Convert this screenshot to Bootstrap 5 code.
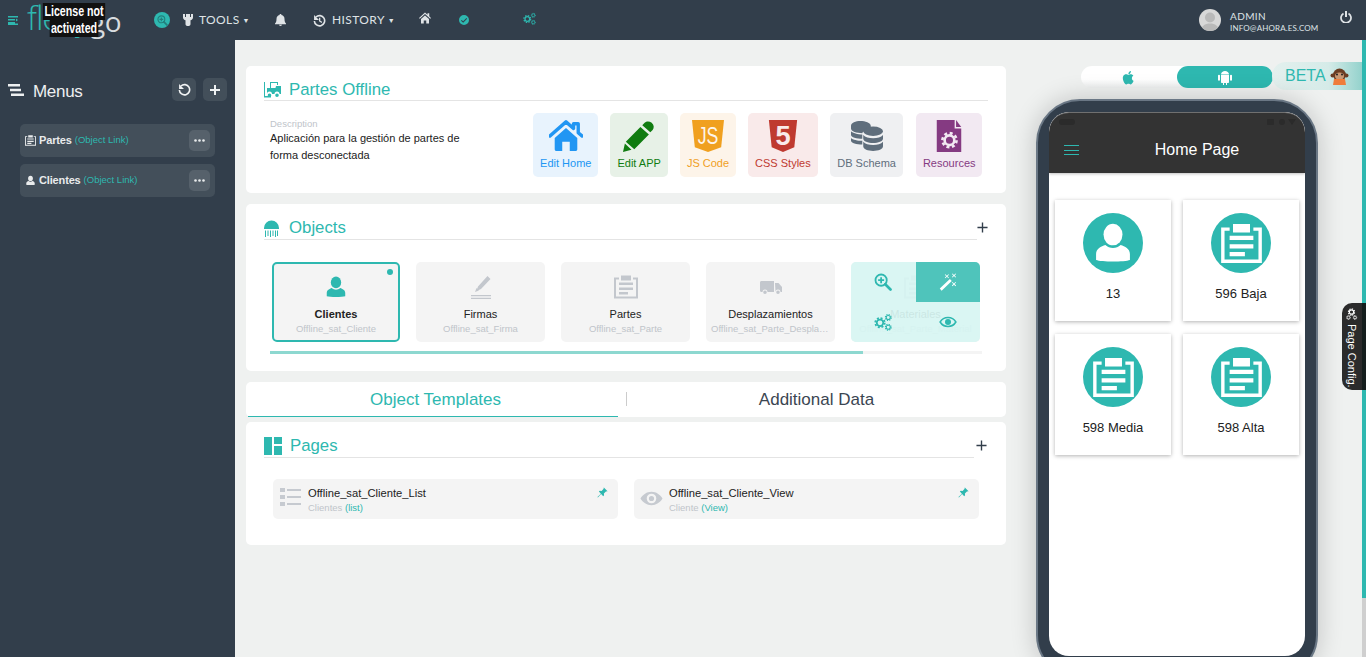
<!DOCTYPE html>
<html lang="en">
<head>
  <meta charset="UTF-8" />
  <meta name="viewport" content="width=device-width, initial-scale=1.0"/>
  <title>flexygo</title>
  <link href="https://cdn.jsdelivr.net/npm/bootstrap@5.3.0/dist/css/bootstrap.min.css" rel="stylesheet"/>
  <style>
    html, body { height: 657px; overflow: hidden; }
    body { font-family: "Liberation Sans", Arial, sans-serif; background: #eff1f0; color: #222; position: relative; }
    svg { display: block; fill: currentColor; flex: none; }
    .topbar { height: 40px; background: #323e4b; color: #dfe3e6; position: relative; font-family: Lato, sans-serif; }
    .top-item { position: absolute; top: 0; height: 40px; display: flex; align-items: center; font-size: 12px; letter-spacing: .4px; }
    .top-caret { font-size: 7px; margin-left: 3px; }
    .logo-fl { position: absolute; left: 27px; top: -2px; font: 300 33px/40px "Open Sans", sans-serif; color: #2eb8b0; letter-spacing: -1px; }
    .logo-go { position: absolute; left: 90px; top: 1px; font: 400 28px/40px "Open Sans", sans-serif; color: #d8dcdf; letter-spacing: -.5px; }
    .lic-box { position: absolute; left: 41px; top: 3px; width: 66px; text-align: center; font: 700 14px/17px "Liberation Sans", sans-serif; color: #fff; white-space: nowrap; }
    .lic-box span { display: block; width: fit-content; margin: 0 auto; background: #111; padding: 0 2px; }
    .lic-squeeze { transform: scaleX(.76); transform-origin: center; width: 88px; margin-left: -11px; }
    .who { left: 1230px; display: block; padding-top: 10px; font-size: 10px; line-height: 12px; }
    .who small { display: block; font-size: 8px; letter-spacing: .15px; }
    .avatar { width: 22px; height: 22px; border-radius: 50%; background: #d8d8d8; overflow: hidden; }
    .page-body { height: 617px; }
    .side-menu { width: 235px; background: #323e4b; color: #eef0f1; padding: 38px 8px 0 20px; flex: none; }
    .menu-head { height: 23px; margin-left: -12px; margin-bottom: 23px; }
    .menu-title { font-size: 17px; letter-spacing: -.3px; margin: 5px 0 0 9px; }
    .menu-btn { width: 24px; height: 23px; background: #434f5a; border-radius: 5px; color: #f0f2f3; }
    .menu-row { width: 195px; height: 33px; background: #434f5a; border-radius: 5px; margin-bottom: 7px; padding: 0 5px; font-size: 11px; font-weight: 700; letter-spacing: -.15px; color: #e9ebec; }
    .menu-row > svg:first-child { margin-right: 3px; }
    .menu-row em { font-style: normal; font-weight: 400; font-size: 9.5px; letter-spacing: 0; color: #2eb8b0; margin-left: 3px; }
    .dots-btn { width: 21px; height: 21px; background: #56616b; border-radius: 5px; margin-left: auto; }
    .mid-col { width: 771px; padding: 26px 0 0 11px; flex: none; }
    .panel { background: #fff; border-radius: 5px; width: 760px; padding: 0 18px; }
    .sec-head { height: 35px; border-bottom: 1px solid #e4e4e4; color: #2eb8b0; font-size: 16.8px; line-height: 22px; }
    .sec-head svg { margin-bottom: 2px; }
    .sec-tall { height: 36px; }
    .sec-low { line-height: 20px; }
    .sec-head span { margin-left: 7px; }
    .add-mark { position: absolute; color: #323e4b; }
    .app-desc { width: 205px; margin: 17px 0 0 6px; font-size: 11px; line-height: 16.5px; }
    .app-desc small { display: block; font-size: 9.5px; line-height: 12px; color: #c0c4ca; }
    .tool-tile { height: 64px; padding: 0 7px; border-radius: 5px; font-size: 11px; text-align: center; }
    .tool-tile svg { height: 32px; width: 34px; margin: 7px auto 3px; }
    .tool-row { margin: 12px 6px 0 auto; column-gap: 12px; }
    .t-blue { background: #e8f3fd; color: #2196f3; }
    .t-green { background: #e7f1e7; color: #107c10; }
    .t-orange { background: #fdf4e9; color: #f0a01f; }
    .t-red { background: #f9eaea; color: #bf3a30; }
    .t-gray { background: #eff0f2; color: #5f6e7c; padding: 0 7.5px; }
    .t-purple { background: #f2e9f2; color: #853a82; padding: 0 6.5px; margin-left: 1px; }
    .obj-tile { width: 129px; height: 80px; background: #f4f4f4; border-radius: 5px; text-align: center; font-size: 11px; position: relative; padding-top: 13px; color: #222; }
    .obj-tile svg { width: 24px; height: 24px; margin: 0 auto 7px; color: #c3c7cd; }
    .obj-tile small { display: block; font-size: 9.5px; color: #c0c4ca; white-space: nowrap; overflow: hidden; text-overflow: ellipsis; padding: 0 5px; line-height: 12px; }
    .obj-active { width: 128px; border: 2px solid #2eb8b0; padding-top: 11px; font-weight: 700; }
    .obj-active small { font-weight: 400; }
    .obj-active svg { color: #2eb8b0; }
    .dot-on { position: absolute; top: 5px; right: 5px; width: 6px; height: 6px; border-radius: 50%; background: #2eb8b0; }
    .hover-mask { position: absolute; inset: 0; display: grid; grid-template-columns: 1fr 1fr; grid-template-rows: 40px 40px; background: rgba(215,245,242,.93); border-radius: 5px; overflow: hidden; color: #2eb8b0; }
    .hover-mask div { display: flex; align-items: center; justify-content: center; }
    .hover-mask svg { width: 18px; height: 18px; margin: 0; color: #2eb8b0; }
    .hover-mask .on { background: #4fc4bb; }
    .hover-mask .on svg { color: #fff; }
    .track { height: 3px; background: #f4f4f4; margin: 9px 6px 0 6px; }
    .track div { height: 3px; background: #8dd8d0; }
    .tab-bar { height: 35px; width: 760px; background: #fff; border-radius: 5px; font-size: 17px; color: #3b4652; }
    .tab-on { width: 370px; margin-left: 2px; padding-left: 5px; height: 35px; color: #2eb8b0; border-bottom: 1px solid #2eb8b0; text-align: center; line-height: 36px; }
    .tab-off { flex: 1; text-align: center; line-height: 36px; padding-right: 8px; }
    .tab-sep { width: 1px; height: 14px; background: #ccc; margin: 10px 8px 0; }
    .page-item { width: 345px; height: 40px; background: #f4f4f4; border-radius: 5px; position: relative; padding: 8px 0 0 7px; font-size: 11.2px; line-height: 13px; }
    .page-item small { display: block; font-size: 9.5px; color: #c0c4ca; margin-top: 1px; }
    .page-item small b { font-weight: 400; color: #2eb8b0; }
    .pin-mark { position: absolute; top: 8px; right: 10px; color: #2eb8b0; }
    .os-switch { position: absolute; left: 1081px; top: 66px; width: 192px; height: 22px; background: linear-gradient(#fff 60%, #eceeee); border-radius: 11px; color: #2eb8b0; }
    .os-on { background: #2eb8b0; color: #fff; border-radius: 11px; }
    .beta-tag { position: absolute; left: 1272px; top: 62px; width: 94px; height: 28px; border-radius: 14px 0 0 14px; background: linear-gradient(90deg, #e3f0ee, #d5ebe8 60%, #8ccfc9); color: #2eb8b0; font-size: 16px; padding-left: 13px; }
    .phone { position: absolute; left: 1036px; top: 99px; width: 282px; height: 580px; background: #323e4b; border: 2px solid #6a7785; border-radius: 44px; box-shadow: 0 0 26px rgba(0,0,0,.2); padding: 11px; }
    .screen { width: 256px; height: 544px; background: #fff; border-radius: 20px; overflow: hidden; }
    .screen-head { height: 61px; background: #333; color: #fff; font-size: 16px; position: relative; border-radius: 20px 20px 0 0; box-shadow: inset 0 1px 0 rgba(255,255,255,.3), 0 1px 3px rgba(0,0,0,.25); }
    .screen-head .title-txt { position: absolute; left: 40px; right: 0; top: 28px; text-align: center; line-height: 20px; }
    .burger { position: absolute; left: 15px; top: 33px; width: 15px; height: 10px; border-top: 1px solid #2eb8b0; border-bottom: 1px solid #2eb8b0; }
    .burger::after { content: ""; display: block; height: 1px; background: #2eb8b0; margin-top: 3.5px; }
    .cam-dots { position: absolute; top: 6px; right: 9px; color: #2b2b2b; }
    .speaker { position: absolute; left: 10px; top: 7px; width: 16px; height: 6px; border-radius: 3px; background: #2b2b2b; }
    .home-grid { display: grid; grid-template-columns: 116px 116px; gap: 13px 12px; padding: 27px 0 0 6px; }
    .home-tile { height: 121px; background: #fff; box-shadow: 0 1px 4px rgba(0,0,0,.3); text-align: center; font-size: 13px; padding-top: 13px; color: #222; }
    .home-round { width: 60px; height: 60px; border-radius: 50%; background: #2eb8b0; color: #fff; margin: 0 auto 11px; }
    .page-cfg { position: absolute; left: 1342px; top: 303px; width: 24px; height: 87px; background: #2b2b2b; border-right: 4px solid #141e1d; border-radius: 10px 0 0 10px; color: #fff; font-size: 11px; writing-mode: vertical-rl; white-space: nowrap; padding-top: 5px; line-height: 20px; }
    .scroll-rail { position: absolute; left: 1362px; top: 40px; width: 4px; height: 617px; background: #cfcfcf; }
    .scroll-rail div { height: 558px; background: #2eb8b0; }
  </style>
</head>
<body>
  <svg width="0" height="0" class="position-absolute">
    <symbol id="i-user" viewBox="-1 0 26 24"><ellipse cx="12" cy="7" rx="5.600" ry="6.400"/><path d="M2 22v-3.500c0-3 3-4.500 5.500-5.300 1.200 1.100 2.800 1.700 4.500 1.700s3.300-.6 4.500-1.700c2.500.8 5.500 2.300 5.500 5.300V22c-3 1.200-17 1.200-20 0z"/></symbol>
    <symbol id="i-clip" viewBox="0 0 24 23"><path d="M0 2h5v2H2v17h20V4h-3V2h5v21H0z"/><path d="M7 0h10v5H7zM5 7h14v2.500H5zM5 12h14v2.500H5zM5 16.500h9V19H5z"/></symbol>
    <symbol id="i-sign" viewBox="0 0 24 24"><path d="M2 20h20v1.200H2zM2 22.800h20V24H2zM18.500 1l3 3-9.500 10-4.500 2 1.500-4.500zM6 17l1.500-4 2.500 2.500z"/></symbol>
    <symbol id="i-van" viewBox="0 0 24 24"><path d="M1 7.500c0-.8.600-1.500 1.500-1.500H15v11H8.500a2.500 2.500 0 0 0-5 0H2.500C1.600 17 1 16.400 1 15.500zM16 8h3.500l3.500 4v5h-1.500a2.500 2.500 0 0 0-5 0zM6 15.500a1.800 1.800 0 1 1 0 3.600 1.800 1.800 0 0 1 0-3.600zM19 15.500a1.800 1.800 0 1 1 0 3.600 1.800 1.800 0 0 1 0-3.600z"/></symbol>
    <symbol id="i-zoom" viewBox="0 0 24 24"><g fill="none" stroke="currentColor" stroke-width="2.400"><circle cx="9.500" cy="9.500" r="7.500"/><path d="M5.500 9.500h8M9.500 5.500v8"/><path d="M15 15l7 7" stroke-width="3.600" stroke-linecap="round"/></g></symbol>
    <symbol id="i-wand" viewBox="0 0 24 24"><path d="M1 20.500L14.500 8l2.500 2.700L3.500 23.500zM8.500 1.500l2 2 2-2 .8.800-2 2 2 2-.8.800-2-2-2 2-.8-.800 2-2-2-2zM18 .5l2 2 2-2 .8.800-2 2 2 2-.8.800-2-2-2 2-.8-.800 2-2-2-2zM18 12l2 2 2-2 .8.800-2 2 2 2-.8.800-2-2-2 2-.8-.800 2-2-2-2z"/></symbol>
    <symbol id="i-gear" viewBox="0 0 24 24"><circle cx="12" cy="12" r="6.500" fill="none" stroke="currentColor" stroke-width="3.500"/><circle cx="12" cy="12" r="9.500" fill="none" stroke="currentColor" stroke-width="3.500" stroke-dasharray="4 3.460"/></symbol>
    <symbol id="i-gears" viewBox="0 0 24 24"><use href="#i-gear" x="0" y="5" width="16" height="16"/><use href="#i-gear" x="14" y="1" width="10" height="10"/><use href="#i-gear" x="14" y="14" width="10" height="10"/></symbol>
    <symbol id="i-eye" viewBox="0 0 24 24"><path fill-rule="evenodd" d="M12 5c5 0 9 3 11.500 7-2.500 4-6.500 7-11.500 7S3 16 .5 12C3 8 7 5 12 5zm0 2a5 5 0 1 0 0 10 5 5 0 0 0 0-10zm0 2.300a2.700 2.700 0 1 1 0 5.400 2.700 2.700 0 0 1 0-5.400z"/></symbol>
    <symbol id="i-eye-line" viewBox="0 0 24 24"><path d="M12 6c4.500 0 8.500 2.600 10.500 6-2 3.400-6 6-10.500 6S3.500 15.400 1.500 12C3.500 8.600 7.500 6 12 6z" fill="none" stroke="currentColor" stroke-width="2"/><circle cx="12" cy="12" r="4"/></symbol>
    <symbol id="i-pin" viewBox="0 0 24 24"><path d="M15 1l8 8-2 1-1-1-5 5 .5 4-2 2-4.500-4.500L2 23l-1-1 7.500-7.500L4 10l2-2 4 .5 5-5-1-1z"/></symbol>
    <symbol id="i-refresh" viewBox="0 0 24 24"><path d="M5.500 5.500A9.500 9.500 0 1 1 2.500 13" fill="none" stroke="currentColor" stroke-width="3"/><path d="M2 2v9h9z"/></symbol>
    <symbol id="i-plus" viewBox="0 0 24 24"><path d="M10 2h4v8h8v4h-8v8h-4v-8H2v-4h8z"/></symbol>
    <symbol id="i-plus-thin" viewBox="0 0 24 24"><path d="M10.500 1h3v9.500H23v3h-9.500V23h-3v-9.500H1v-3h9.500z"/></symbol>
  </svg>

  <header class="topbar">
    <div class="top-item" style="left:8px"><svg width="10" height="9" viewBox="0 0 10 9" style="color:#2eb8b0"><path d="M0 0h10v1.500H0zM0 3h7v1.500H0zM8 2.500l2 1.500-2 1.500zM0 6h7v1.500H0zM0 7.500h10V9H0z"/></svg></div>
    <div class="logo-fl">flexy</div>
    <div class="logo-go">go</div>
    <div class="lic-box"><div class="lic-squeeze"><span>License not</span><span>activated</span></div></div>
    <div class="top-item" style="left:154px"><span class="d-flex align-items-center justify-content-center rounded-circle" style="width:16px;height:16px;background:#2eb8b0;color:#237f7c"><svg width="11" height="11"><use href="#i-zoom"/></svg></span></div>
    <div class="top-item" style="left:183px"><svg width="10" height="12" viewBox="0 0 10 12"><path d="M0 0h2v3h1V0h4v3h1V0h2v3.500C10 5 8.800 6 7.500 6.300V10c0 1.400-1 2-2.500 2s-2.500-.6-2.500-2V6.300C1.200 6 0 5 0 3.500z"/></svg><span style="margin-left:6px">TOOLS</span><span class="top-caret">▼</span></div>
    <div class="top-item" style="left:275px"><svg width="11" height="12" viewBox="0 0 11 12"><path d="M5.500 0c.5 0 1 .4 1 1C8.500 1.500 9.500 3 9.500 5c0 2.500.5 3.500 1.500 4.500v.7H0v-.7C1 8.500 1.500 7.500 1.500 5c0-2 1-3.500 3-4 0-.6.500-1 1-1zM4 10.800h3c0 .7-.7 1.200-1.500 1.200S4 11.500 4 10.800z"/></svg></div>
    <div class="top-item" style="left:313px"><svg width="13" height="13" viewBox="0 0 24 24"><use href="#i-refresh"/><path d="M11 7h2.500v5.500l3.500 2-1.200 2-4.800-3z"/></svg><span style="margin-left:6px">HISTORY</span><span class="top-caret">▼</span></div>
    <div class="top-item" style="left:419px;top:-2px"><svg width="12" height="12" viewBox="0 0 24 24"><path d="M12 1l5 4.500V2.500h3.500v6L24 12l-1.500 1.500L12 4 1.500 13.500 0 12zM4 14l8-7 8 7v9h-5.500v-6h-5v6H4z"/></svg></div>
    <div class="top-item" style="left:459px"><svg width="10" height="10" viewBox="0 0 10 10" style="color:#2eb8b0"><path fill-rule="evenodd" d="M5 0a5 5 0 1 1 0 10A5 5 0 0 1 5 0zM2.500 5L2 5.700l2.200 2 3.900-4L7.400 3 4.200 6.300z"/></svg></div>
    <div class="top-item" style="left:523px;top:-2px;color:#2eb8b0"><svg width="13" height="13"><use href="#i-gears"/></svg></div>
    <div class="top-item" style="left:1199px"><div class="avatar"><svg width="22" height="22" viewBox="0 0 22 22" style="color:#b9b9b9"><circle cx="11" cy="8.500" r="5"/><path d="M2 22c0-5 4-7.500 9-7.500s9 2.500 9 7.500z"/></svg></div></div>
    <div class="top-item who">ADMIN<small>INFO@AHORA.ES.COM</small></div>
    <div class="top-item" style="left:1340px;top:-3px"><svg width="12" height="12" viewBox="0 0 24 24"><path d="M7 5a10 10 0 1 0 10 0" fill="none" stroke="currentColor" stroke-width="3.500"/><path d="M10 0h4v12h-4z"/></svg></div>
  </header>

  <div class="d-flex page-body">
    <aside class="side-menu">
      <div class="menu-head d-flex align-items-center">
        <svg width="16" height="12" viewBox="0 0 16 12"><path d="M0 0h12v2.500H0zM2 4.700h11v2.500H2zM3 9.500h13V12H3z"/></svg>
        <span class="menu-title">Menus</span>
        <span class="menu-btn d-flex align-items-center justify-content-center ms-auto"><svg width="13" height="13"><use href="#i-refresh"/></svg></span>
        <span class="menu-btn d-flex align-items-center justify-content-center" style="margin-left:7px"><svg width="12" height="12"><use href="#i-plus"/></svg></span>
      </div>
      <div class="menu-row d-flex align-items-center"><svg width="11" height="13"><use href="#i-clip"/></svg>Partes <em>(Object Link)</em><span class="dots-btn d-flex align-items-center justify-content-center"><svg width="11" height="3" viewBox="0 0 11 3"><circle cx="1.500" cy="1.500" r="1.300"/><circle cx="5.500" cy="1.500" r="1.300"/><circle cx="9.500" cy="1.500" r="1.300"/></svg></span></div>
      <div class="menu-row d-flex align-items-center"><svg width="11" height="13"><use href="#i-user"/></svg>Clientes <em>(Object Link)</em><span class="dots-btn d-flex align-items-center justify-content-center"><svg width="11" height="3" viewBox="0 0 11 3"><circle cx="1.500" cy="1.500" r="1.300"/><circle cx="5.500" cy="1.500" r="1.300"/><circle cx="9.500" cy="1.500" r="1.300"/></svg></span></div>
    </aside>

    <main class="mid-col">
      <section class="panel" style="height:127px">
        <div class="sec-head sec-low d-flex align-items-end">
          <svg width="18" height="18" viewBox="0 0 18 18"><path d="M0 2h1v14h6v1.500H0zM3 8h3V2h8v3h-1V3H7v5h4.500l.5-2h5v8h-1.500a2.500 2.500 0 0 0-5 0H8a2.500 2.500 0 0 0-5 0zM5.500 13.500a1.800 1.800 0 1 1 0 3.600 1.800 1.800 0 0 1 0-3.600zM13 13.500a1.800 1.800 0 1 1 0 3.600 1.800 1.800 0 0 1 0-3.600z"/></svg>
          <span>Partes Offline</span>
        </div>
        <div class="d-flex">
          <div class="app-desc"><small>Description</small>Aplicación para la gestión de partes de forma desconectada</div>
          <div class="d-flex tool-row">
            <div class="tool-tile t-blue"><svg viewBox="0 0 36 34"><path d="M1 17L18 2l8 7V4h5v9.500l4 3.500" fill="none" stroke="currentColor" stroke-width="3.600" stroke-linecap="round" stroke-linejoin="round"/><path d="M6 19L18 8.500 30 19v12c0 1-.8 2-2 2h-6V23h-8v10H8c-1.200 0-2-1-2-2z"/></svg>Edit Home</div>
            <div class="tool-tile t-green"><svg viewBox="0 0 36 34"><path d="M24 3c2-2 5-2 7.500 0s2.800 5.500 1 7.500l-2.500 2.500-8.500-7.500zM19.500 7.500l9 8L13 31l-9-8zM3 25l7 6.500-9 2.500z"/></svg>Edit APP</div>
            <div class="tool-tile t-orange"><svg viewBox="0 0 36 34"><path d="M1 0h34l-3 29-14 5-14-5z"/><text x="18" y="26" text-anchor="middle" font-family="Liberation Sans, sans-serif" font-size="25" textLength="22" lengthAdjust="spacingAndGlyphs" fill="#fdf4e9">JS</text></svg>JS Code</div>
            <div class="tool-tile t-red"><svg viewBox="0 0 36 34"><path d="M3 0h30l-3 29-12 5-12-5z"/><text x="18" y="27" text-anchor="middle" font-family="Liberation Sans, sans-serif" font-weight="700" font-size="29" fill="#f9eaea">5</text></svg>CSS Styles</div>
            <div class="tool-tile t-gray"><svg viewBox="0 0 36 34"><path d="M1 6c0-3 5-5 10-5s11 2 11 5v3c-4 0-8 2-9 5-6 0-12-2-12-5zM1 12c2 2 7 3.500 12 3.500v4.500c-6 0-12-1.500-12-4zM1 19c2 2 7 3 12 3v4c-6 0-12-1.500-12-4z"/><ellipse cx="24.500" cy="12" rx="10.500" ry="5"/><path d="M14 16c2 2.500 6 3.500 10.500 3.500S33 18.500 35 16v4c0 2.500-5 4.500-10.500 4.500S14 22.500 14 20zM14 23c2 2.500 6 3.500 10.500 3.500S33 25.500 35 23v5c0 3-5 5-10.500 5S14 31 14 28z"/></svg>DB Schema</div>
            <div class="tool-tile t-purple"><svg viewBox="0 0 36 34"><path d="M5 0h19v9h7v25H5z"/><path d="M25.500 0l5.500 7.500h-5.500z"/><use href="#i-gear" x="9" y="12" width="19" height="19" style="color:#f2e9f2"/></svg>Resources</div>
          </div>
        </div>
      </section>

      <section class="panel position-relative" style="height:167px;margin-top:11px">
        <div class="sec-head sec-tall d-flex align-items-end" style="margin-right:11px">
          <svg width="15" height="17" viewBox="0 0 15 17"><path d="M0 8a7.500 7.500 0 0 1 15 0v1H0zM1 10.500h1V17H1zM3.500 10.500h1V16h-1zM6 10.500h1V17H6zM8.500 10.500h1V16h-1zM11 10.500h1V17h-1zM13 10.500h1V16h-1z"/></svg>
          <span style="margin-left:10px">Objects</span>
        </div>
        <svg class="add-mark" style="right:18px;top:18px" width="11" height="11"><use href="#i-plus-thin"/></svg>
        <div class="d-flex" style="gap:16px;margin:22px 0 0 8px">
          <div class="obj-tile obj-active"><span class="dot-on"></span><svg><use href="#i-user"/></svg>Clientes<small>Offline_sat_Cliente</small></div>
          <div class="obj-tile"><svg><use href="#i-sign"/></svg>Firmas<small>Offline_sat_Firma</small></div>
          <div class="obj-tile"><svg><use href="#i-clip"/></svg>Partes<small>Offline_sat_Parte</small></div>
          <div class="obj-tile"><svg><use href="#i-van"/></svg>Desplazamientos<small>Offline_sat_Parte_Desplazamiento</small></div>
          <div class="obj-tile"><svg><use href="#i-clip"/></svg>Materiales<small>Offline_sat_Parte_Material</small>
            <div class="hover-mask">
              <div><svg><use href="#i-zoom"/></svg></div>
              <div class="on"><svg><use href="#i-wand"/></svg></div>
              <div><svg><use href="#i-gears"/></svg></div>
              <div><svg><use href="#i-eye-line"/></svg></div>
            </div>
          </div>
        </div>
        <div class="track"><div style="width:593px"></div></div>
      </section>

      <nav class="tab-bar d-flex" style="margin-top:11px">
        <div class="tab-on">Object Templates</div>
        <div class="tab-sep"></div>
        <div class="tab-off">Additional Data</div>
      </nav>

      <section class="panel position-relative" style="height:123px;margin-top:5px">
        <div class="sec-head sec-tall d-flex align-items-end" style="margin-right:14px">
          <svg width="18" height="18" viewBox="0 0 18 18"><path d="M0 0h8v18H0zM10 0h8v7h-8zM10 9h8v9h-8z"/></svg>
          <span style="margin-left:8px">Pages</span>
        </div>
        <svg class="add-mark" style="right:19px;top:18px" width="11" height="11"><use href="#i-plus-thin"/></svg>
        <div class="d-flex" style="gap:16px;margin:21px 0 0 9px">
          <div class="page-item d-flex"><svg width="21" height="19" viewBox="0 0 21 19" style="color:#c6cad0;margin-right:7px"><path d="M0 1h5v4H0zM7 2h14v2H7zM0 8h5v4H0zM7 9h14v2H7zM0 15h5v4H0zM7 16h14v2H7z"/></svg><div>Offline_sat_Cliente_List<small>Clientes <b>(list)</b></small></div><svg class="pin-mark" width="11" height="11"><use href="#i-pin"/></svg></div>
          <div class="page-item d-flex"><svg width="23" height="23" viewBox="0 0 24 24" style="color:#c6cad0;margin:0 6px 0 -1px"><use href="#i-eye"/></svg><div>Offline_sat_Cliente_View<small>Cliente <b>(View)</b></small></div><svg class="pin-mark" width="11" height="11"><use href="#i-pin"/></svg></div>
        </div>
      </section>
    </main>
  </div>

  <div class="os-switch d-flex">
    <div class="w-50 d-flex align-items-center justify-content-center"><svg width="14" height="15" viewBox="0 0 24 24"><path d="M17 13c0-3 2.400-4.300 2.500-4.400-1.400-2-3.500-2.300-4.200-2.300-1.800-.2-3.500 1-4.400 1-.9 0-2.300-1-3.800-1-2 0-3.800 1.100-4.800 2.900-2 3.500-.5 8.800 1.500 11.700 1 1.400 2.100 3 3.600 2.900 1.400-.1 2-.9 3.700-.9s2.200.9 3.700.9c1.500 0 2.500-1.400 3.500-2.800 1.100-1.600 1.500-3.200 1.600-3.300-.1 0-3-1.100-3-4.600zM14.200 4.600c.8-1 1.300-2.300 1.200-3.600-1.100 0-2.500.8-3.300 1.700-.7.800-1.300 2.100-1.200 3.400 1.300.1 2.500-.6 3.300-1.500z"/></svg></div>
    <div class="w-50 os-on d-flex align-items-center justify-content-center"><svg width="14" height="15" viewBox="0 0 14 15"><path d="M3 4.500C3 2.500 5 1 7 1s4 1.500 4 3.500zM3 5h8v7c0 .6-.4 1-1 1H9v2H8v-2H6v2H5v-2H4c-.6 0-1-.4-1-1zM0 5.500C0 5 .4 4.700 1 4.700s1 .3 1 .8v4.500c0 .5-.4.800-1 .8s-1-.3-1-.8zM12 5.500c0-.5.4-.8 1-.8s1 .3 1 .8v4.500c0 .5-.4.800-1 .8s-1-.3-1-.8z"/></svg></div>
  </div>
  <div class="beta-tag d-flex align-items-center">BETA
    <svg class="ms-1" width="19" height="19" viewBox="0 0 19 19"><circle cx="9.500" cy="8" r="6.500" fill="#6b3d22"/><circle cx="2.500" cy="8.500" r="2" fill="#6b3d22"/><circle cx="16.500" cy="8.500" r="2" fill="#6b3d22"/><ellipse cx="9.500" cy="9" rx="4.500" ry="3.500" fill="#c99873"/><circle cx="7" cy="7.500" r="1" fill="#222"/><circle cx="12" cy="7.500" r="1" fill="#222"/><path d="M4 12h11l1 6H3z" fill="#ef7d3b"/></svg>
  </div>

  <div class="phone">
    <div class="screen">
      <div class="screen-head">
        <span class="speaker"></span>
        <svg class="cam-dots" width="29" height="8" viewBox="0 0 29 8"><rect x="0" y="1" width="7" height="6" rx="1"/><circle cx="15" cy="4" r="3"/><path d="M21 1h8l-4 6z"/></svg>
        <span class="burger"></span>
        <div class="title-txt">Home Page</div>
      </div>
      <div class="home-grid">
        <div class="home-tile"><div class="home-round d-flex align-items-center justify-content-center"><svg width="44" height="42"><use href="#i-user"/></svg></div>13</div>
        <div class="home-tile"><div class="home-round d-flex align-items-center justify-content-center"><svg width="41" height="39"><use href="#i-clip"/></svg></div>596 Baja</div>
        <div class="home-tile"><div class="home-round d-flex align-items-center justify-content-center"><svg width="41" height="39"><use href="#i-clip"/></svg></div>598 Media</div>
        <div class="home-tile"><div class="home-round d-flex align-items-center justify-content-center"><svg width="41" height="39"><use href="#i-clip"/></svg></div>598 Alta</div>
      </div>
    </div>
  </div>

  <div class="scroll-rail"><div></div></div>
  <div class="page-cfg d-flex align-items-center"><svg width="12" height="12" class="mb-1" style="transform:rotate(90deg)"><use href="#i-gears"/></svg>Page Config.</div>
</body>
</html>
